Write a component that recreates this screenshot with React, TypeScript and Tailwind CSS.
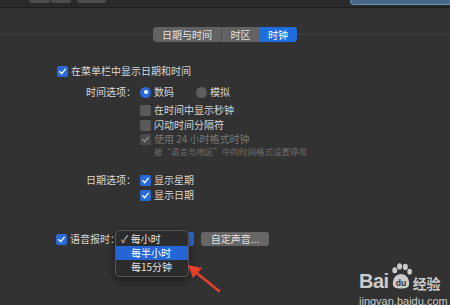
import React from 'react';

const font = { fontFamily: '"Noto Sans CJK SC", "Noto Sans", sans-serif' };

const Check = ({ color = 'white' }: { color?: string }) => (
  <svg viewBox="0 0 10 10" className="w-[9px] h-[9px]">
    <path d="M2 5.2 L4.2 7.4 L8 2.6" fill="none" stroke={color} strokeWidth="1.6" strokeLinecap="round" strokeLinejoin="round" />
  </svg>
);

const Box = ({ checked, disabled }: { checked?: boolean; disabled?: boolean }) => {
  if (disabled) {
    return (
      <div className="w-[11px] h-[11px] rounded-[2px] bg-[#4a4a4a] flex items-center justify-center shrink-0">
        <Check color="#8a8a8a" />
      </div>
    );
  }
  return checked ? (
    <div className="w-[11px] h-[11px] rounded-[2px] bg-[#2a6ad8] flex items-center justify-center shrink-0">
      <Check />
    </div>
  ) : (
    <div className="w-[11px] h-[11px] rounded-[2px] bg-[#5a5a5a] shrink-0" />
  );
};

const Radio = ({ on }: { on?: boolean }) =>
  on ? (
    <div className="w-[11px] h-[11px] rounded-full bg-[#2a6ad8] flex items-center justify-center shrink-0">
      <div className="w-[4px] h-[4px] rounded-full bg-white" />
    </div>
  ) : (
    <div className="w-[11px] h-[11px] rounded-full bg-[#5f5f5f] shrink-0" />
  );

const Label = ({ children }: { children: React.ReactNode }) => (
  <div className="w-[137px] text-right pr-[1px]">{children}</div>
);

export default function App() {
  return (
    <div className="w-[450px] h-[305px] bg-[#323232] relative overflow-hidden text-[10px] text-[#d8d8d8] leading-none" style={font}>
      {/* top toolbar remnant */}
      <div className="h-[8px] bg-[#2a2a2a] border-b border-[#1d1d1d] flex items-start">
        <div className="ml-[29px] w-[21px] h-[3px] bg-[#4b4b4b] rounded-b-[2px]" />
        <div className="ml-[1px] w-[20px] h-[3px] bg-[#4b4b4b] rounded-b-[2px]" />
        <div className="ml-[6px] w-[29px] h-[3px] bg-[#4b4b4b] rounded-b-[2px]" />
        <div className="ml-auto w-[100px] h-[5px] bg-[#46698a] border-b border-l border-[#6d8fae] rounded-bl-[4px]" />
      </div>

      {/* tabs */}
      <div className="relative mt-[19px] h-[15px] flex justify-center">
        <div className="absolute left-0 right-0 top-[7px] h-[1px] bg-[#404040]" />
        <div className="relative flex h-[15px] rounded-[4px] overflow-hidden bg-[#626262] text-[#e2e2e2]">
          <div className="w-[69px] flex items-center justify-center border-r border-[#4e4e4e]">日期与时间</div>
          <div className="w-[37px] flex items-center justify-center">时区</div>
          <div className="w-[38px] flex items-center justify-center bg-[#1f6ddf] text-white">时钟</div>
        </div>
      </div>

      <div className="flex flex-col">
        <div className="mt-[22px] h-[14px] flex items-center pl-[57px] gap-[3px]">
          <Box checked />
          <span>在菜单栏中显示日期和时间</span>
        </div>

        <div className="mt-[7px] h-[14px] flex items-center">
          <Label>时间选项：</Label>
          <div className="ml-[3px] flex items-center gap-[3px]">
            <Radio on />
            <span>数码</span>
          </div>
          <div className="ml-[22px] flex items-center gap-[3px]">
            <Radio />
            <span>模拟</span>
          </div>
        </div>

        <div className="mt-[4px] h-[14px] flex items-center pl-[140px] gap-[3px]">
          <Box />
          <span>在时间中显示秒钟</span>
        </div>
        <div className="mt-[1px] h-[14px] flex items-center pl-[140px] gap-[3px]">
          <Box />
          <span>闪动时间分隔符</span>
        </div>
        <div className="mt-[1px] h-[12px] flex items-center pl-[140px] gap-[3px] text-[#767676]">
          <Box disabled />
          <span>使用 24 小时格式时钟</span>
        </div>
        <div className="mt-[2px] h-[9px] flex items-center pl-[154px] text-[8.5px] text-[#707070]">
          被“语言与地区”中的时间格式设置停用
        </div>

        <div className="mt-[17px] h-[14px] flex items-center">
          <Label>日期选项：</Label>
          <div className="ml-[3px] flex items-center gap-[3px]">
            <Box checked />
            <span>显示星期</span>
          </div>
        </div>
        <div className="mt-[1px] h-[14px] flex items-center pl-[140px] gap-[3px]">
          <Box checked />
          <span>显示日期</span>
        </div>

        <div className="mt-[30px] h-[14px] flex items-center pl-[56px]">
          <Box checked />
          <span className="ml-[3px]">语音报时：</span>
          <div className="ml-[-2px] w-[76px] h-[14px] rounded-[3px] bg-[#5a5a5a] flex justify-end">
            <div className="w-[7px] h-full bg-[#2a6ad8] rounded-r-[3px]" />
          </div>
          <div className="ml-[7px] w-[68px] h-[14px] rounded-[3px] bg-[#666666] flex items-center justify-center text-[#e0e0e0]">
            自定声音...
          </div>
        </div>
      </div>

      {/* open popup menu */}
      <div className="absolute left-[115px] top-[230px] w-[74px] h-[47px] rounded-[4px] bg-[#2c2c2c] border border-[#565656] shadow-[0_3px_8px_rgba(0,0,0,0.5)] py-[1px] flex flex-col text-[#e4e4e4]">
        <div className="h-[14px] flex items-center pl-[5px] gap-[3px]">
          <span className="text-[10px]">✓</span>
          <span>每小时</span>
        </div>
        <div className="h-[14px] flex items-center pl-[15px] bg-[#2566d6] text-white">每半小时</div>
        <div className="h-[14px] flex items-center pl-[15px]">每15分钟</div>
      </div>

      {/* red arrow */}
      <svg className="absolute left-[180px] top-[258px]" width="50" height="40" viewBox="0 0 50 40">
        <line x1="39" y1="33" x2="13" y2="12" stroke="#e5402b" strokeWidth="2.5" strokeLinecap="round" />
        <polygon points="8,7 22,10 13,20" fill="#e5402b" />
      </svg>

      {/* baidu watermark */}
      <div className="absolute left-[359px] top-[261px] w-[89px] flex flex-col items-start text-[#cbcbcb]">
        <div className="flex items-end h-[30px]">
          <span className="text-[20px] font-bold leading-none tracking-[-0.5px]" style={{ fontFamily: '"Liberation Sans", Arial, sans-serif' }}>Bai</span>
          <svg width="24" height="29" viewBox="0 0 25 29">
            <ellipse cx="6" cy="8" rx="2.6" ry="3.2" fill="#cbcbcb" />
            <ellipse cx="11" cy="4" rx="2.6" ry="3.2" fill="#cbcbcb" />
            <ellipse cx="17" cy="4.5" rx="2.6" ry="3.2" fill="#cbcbcb" />
            <ellipse cx="21.5" cy="9.5" rx="2.4" ry="3" fill="#cbcbcb" />
            <path d="M4 22 C4 15 9 12 12.5 12 C16 12 21 15 21 22 C21 26 18 27 12.5 27 C7 27 4 26 4 22 Z" fill="#cbcbcb" />
            <text x="12.5" y="24.5" textAnchor="middle" fontSize="9" fontWeight="bold" fill="#323232" fontFamily="Liberation Sans, Arial, sans-serif">du</text>
          </svg>
          <span className="text-[14px] font-bold leading-none mb-[1px]">经验</span>
        </div>
        <div className="mt-[5px] text-[11px] leading-none" style={{ fontFamily: '"Liberation Sans", Arial, sans-serif' }}>jingyan.baidu.com</div>
      </div>
    </div>
  );
}
